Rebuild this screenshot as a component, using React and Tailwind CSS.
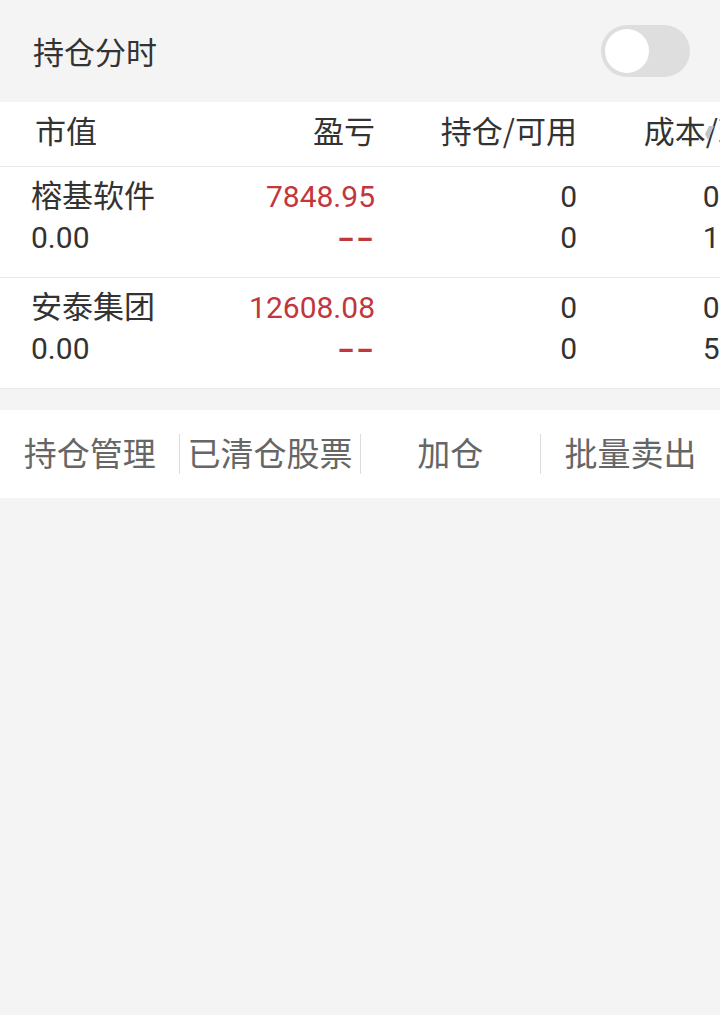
import React from "react";

const cjk = { fontFamily: '"Noto Sans CJK SC", "Noto Sans", sans-serif' };
const num = { fontFamily: 'Roboto, "Noto Sans CJK SC", sans-serif' };

const rows = [
    { name: "榕基软件", value: "0.00", pl: "7848.95", plPct: "--", hold: "0", avail: "0", cost: "0.000", price: "12.72" },
    { name: "安泰集团", value: "0.00", pl: "12608.08", plPct: "--", hold: "0", avail: "0", cost: "0.000", price: "5.040" },
];

const actions = ["持仓管理", "已清仓股票", "加仓", "批量卖出"];

function Toggle() {
    return (
        <div className="w-[89px] h-[52px] rounded-full bg-[#dedede] flex items-center pl-[4px]">
            <div className="w-[44px] h-[44px] rounded-full bg-white" />
        </div>
    );
}

export default function App() {
    return (
        <div className="min-h-screen w-[720px] bg-[#f4f4f4] text-[#333]" style={cjk}>
            {/* topo */}
            <div className="h-[102px] flex items-center justify-between pl-[33px] pr-[30px]">
                <span className="text-[31px] leading-none -mt-[2px]">持仓分时</span>
                <Toggle />
            </div>

            {/* tabela */}
            <div className="bg-white overflow-hidden">
                <div className="relative w-[820px] h-[65px] flex items-center pb-[7px] border-b border-[#e9e9e9] text-[31px]">
                    <div className="w-[200px] pl-[35px]">市值</div>
                    <div className="w-[175px] text-right">盈亏</div>
                    <div className="w-[202px] text-right">持仓/可用</div>
                    <div className="w-[203px] text-right">成本/现价</div>
                    <svg className="absolute left-[705px] top-[24px]" width="9" height="14" viewBox="0 0 9 14">
                        <polygon points="4,0 9,0 3,14 0,8" fill="#c4c4c4" />
                    </svg>
                </div>
                {rows.map((r) => (
                    <div key={r.name} className="w-[820px] h-[111px] flex pt-[9px] border-b border-[#e9e9e9] leading-[41px] text-[30px]">
                        <div className="w-[200px] pl-[31px] flex flex-col">
                            <span className="text-[31px] -translate-y-[3px]">{r.name}</span>
                            <span style={num}>{r.value}</span>
                        </div>
                        <div className="w-[175px] flex flex-col items-end text-[#c1373d]" style={num}>
                            <span>{r.pl}</span>
                            <span className="font-bold scale-x-[1.6] origin-right">{r.plPct}</span>
                        </div>
                        <div className="w-[202px] flex flex-col items-end" style={num}>
                            <span>{r.hold}</span>
                            <span>{r.avail}</span>
                        </div>
                        <div className="w-[201px] flex flex-col items-end" style={num}>
                            <span>{r.cost}</span>
                            <span>{r.price}</span>
                        </div>
                    </div>
                ))}
            </div>

            {/* ações */}
            <div className="mt-[21px] h-[88px] bg-white flex items-center">
                {actions.map((a, i) => (
                    <React.Fragment key={a}>
                        {i > 0 && <div className="w-px h-[40px] bg-[#dcdcdc]" />}
                        <div className="flex-1 text-center text-[33px] text-[#666] leading-none -mt-[3px]">{a}</div>
                    </React.Fragment>
                ))}
            </div>
        </div>
    );
}
